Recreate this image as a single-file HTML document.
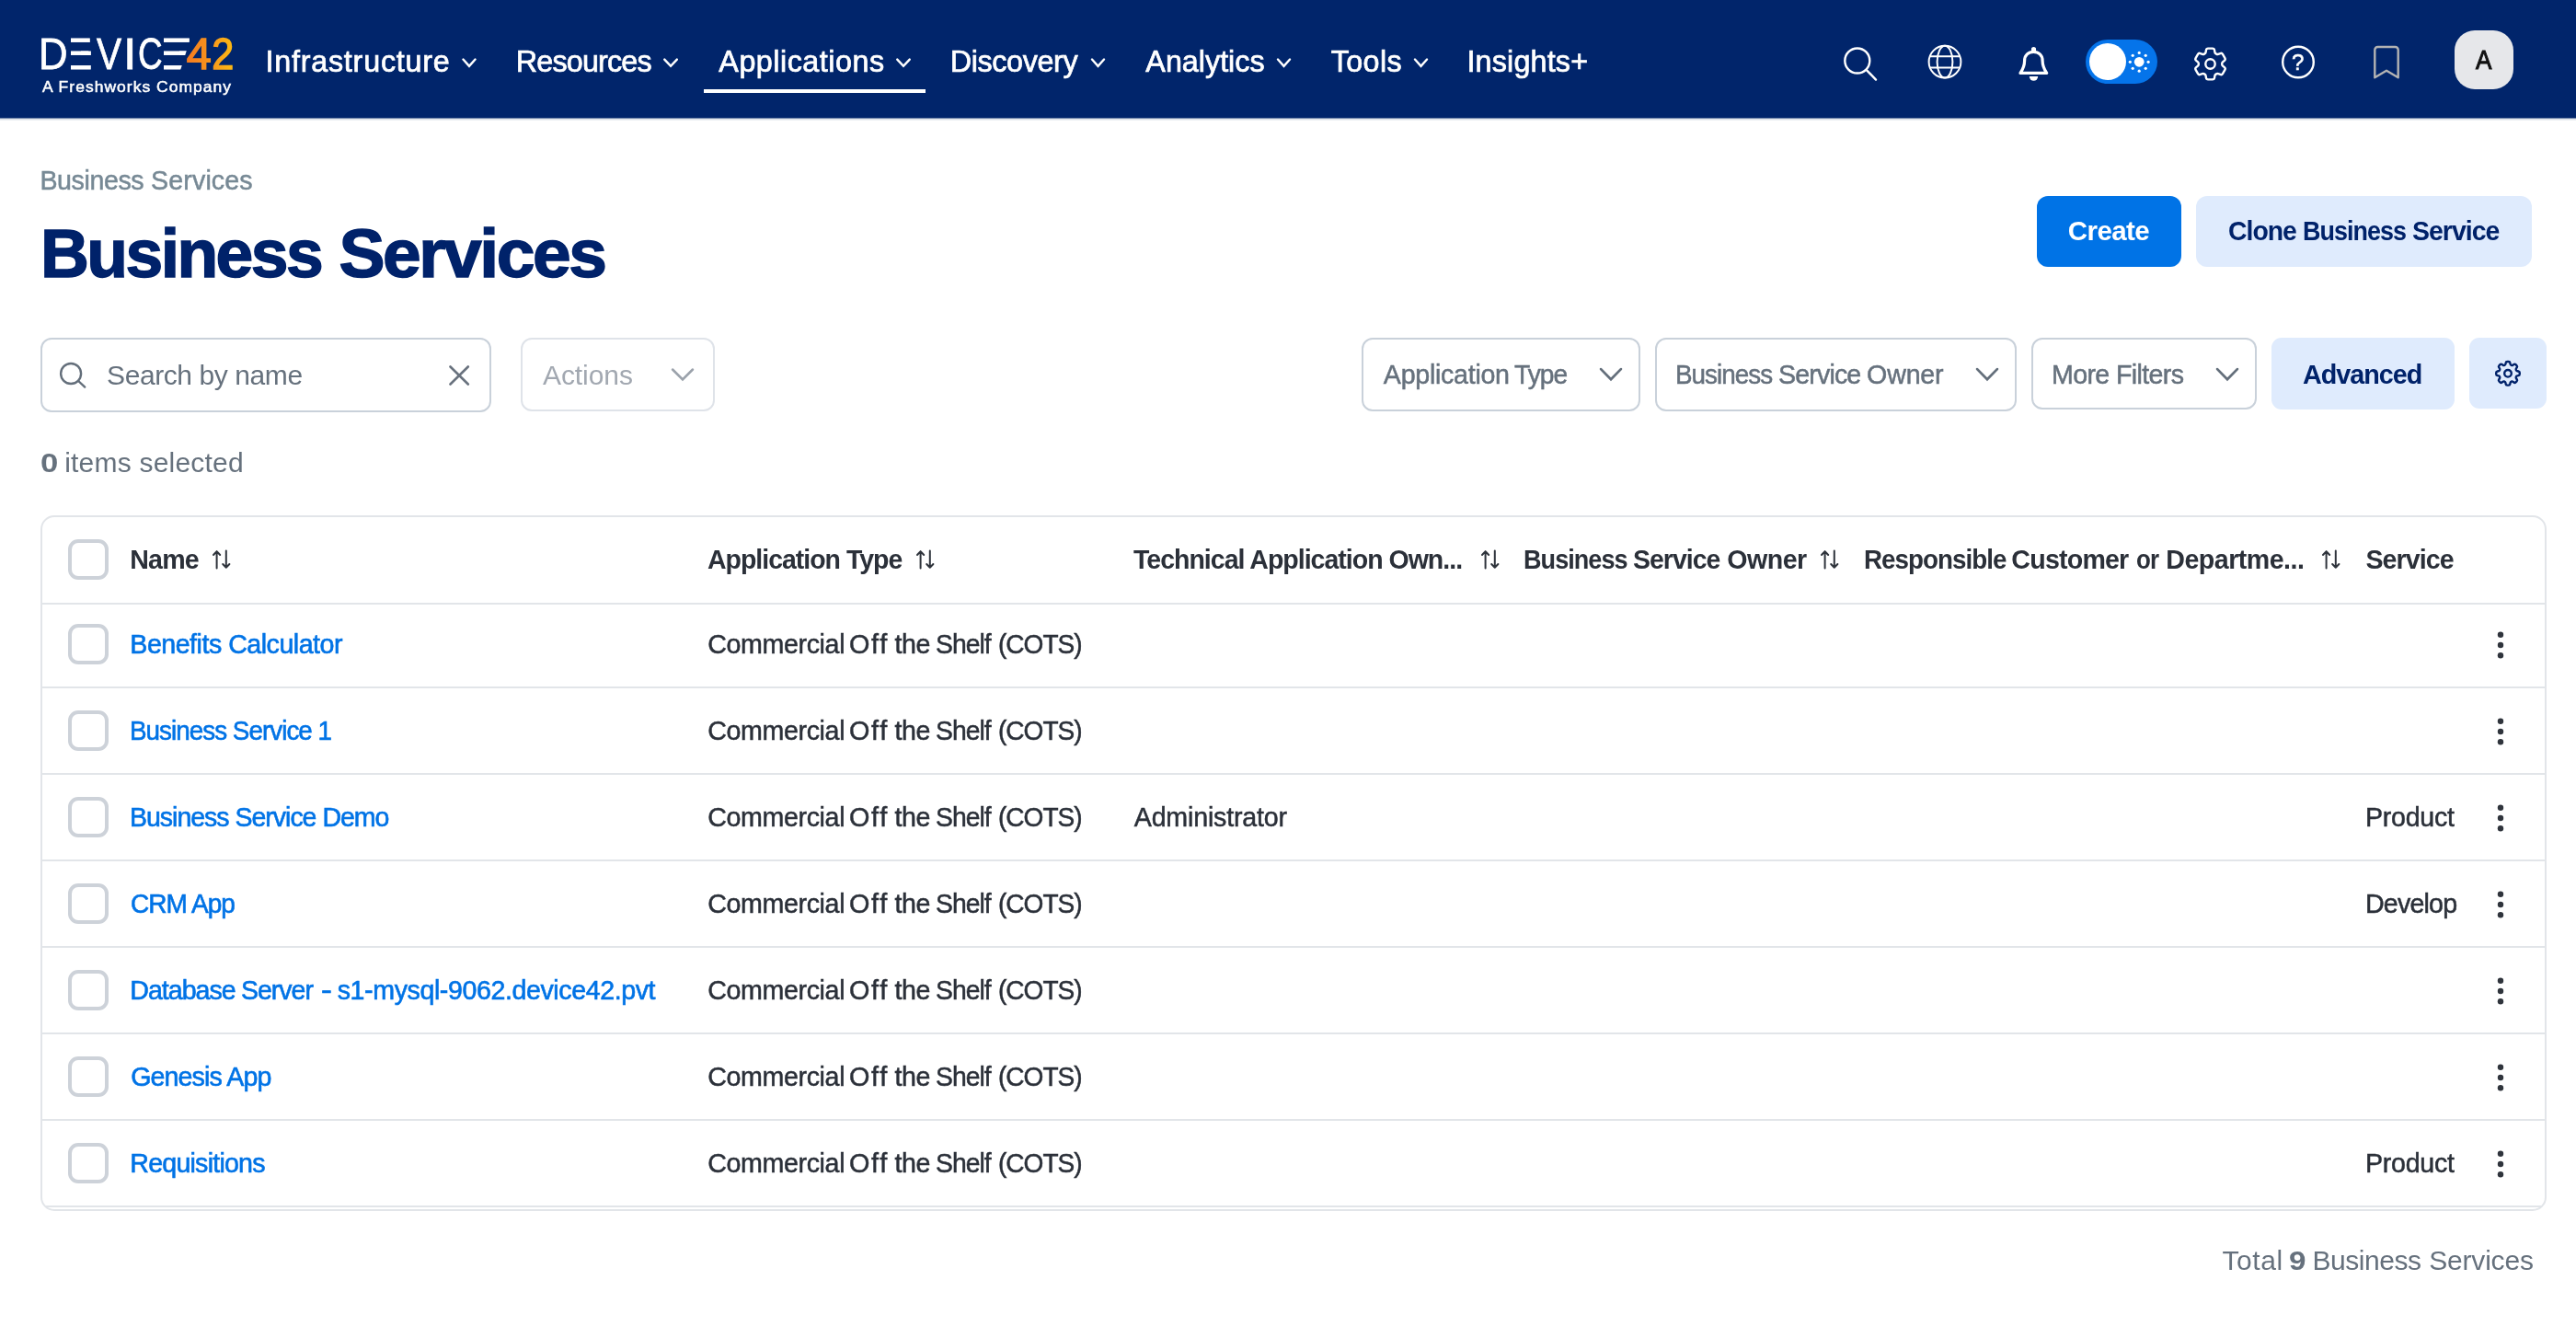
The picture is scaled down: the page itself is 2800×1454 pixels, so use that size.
<!DOCTYPE html><html lang="en"><head><meta charset="utf-8"><title>Business Services - Device42</title>
<style>html,body{margin:0;padding:0;background:#fff;}body{width:2800px;height:1454px;position:relative;overflow:hidden;font-family:"Liberation Sans",sans-serif;}a{text-decoration:none;}h1,p,ul,li{margin:0;padding:0;font-weight:normal;list-style:none;}#app{position:absolute;left:0;top:0;width:2800px;height:1454px;overflow:hidden;will-change:transform;background:#fff;}</style></head><body><div id="app">
<header>
<div style="position:absolute;left:0px;top:0px;width:2800px;height:128px;box-sizing:border-box;background:#01256b;"></div>
<div style="position:absolute;left:0px;top:128px;width:2800px;height:1px;box-sizing:border-box;background:#7185aa;"></div>
<div style="position:absolute;left:0px;top:129px;width:2800px;height:1px;box-sizing:border-box;background:#dfe3e8;"></div>
<div style="position:absolute;left:0px;top:130px;width:2800px;height:1px;box-sizing:border-box;background:#eceff2;"></div>
<div id="logo">
<span style="position:absolute;left:42.11px;top:34.12px;font-size:49.0px;line-height:1;white-space:nowrap;color:#fff;transform:scaleX(0.8912);transform-origin:0 0;-webkit-text-stroke:0.8px #fff;z-index:3;">D</span><span style="position:absolute;left:68.42px;top:34.12px;font-size:49.0px;line-height:1;white-space:nowrap;color:#fff;transform:scaleX(0.9907);transform-origin:0 0;-webkit-text-stroke:0.8px #fff;z-index:1;">E</span><span style="position:absolute;left:105.40px;top:34.12px;font-size:49.0px;line-height:1;white-space:nowrap;color:#fff;transform:scaleX(0.8285);transform-origin:0 0;-webkit-text-stroke:0.8px #fff;z-index:3;">V</span><span style="position:absolute;left:134.32px;top:34.12px;font-size:49.0px;line-height:1;white-space:nowrap;color:#fff;transform:scaleX(1.0612);transform-origin:0 0;-webkit-text-stroke:0.8px #fff;z-index:3;">I</span><span style="position:absolute;left:149.56px;top:34.12px;font-size:49.0px;line-height:1;white-space:nowrap;color:#fff;transform:scaleX(0.7526);transform-origin:0 0;-webkit-text-stroke:0.8px #fff;z-index:3;">C</span><span style="position:absolute;left:165.26px;top:34.12px;font-size:49.0px;line-height:1;white-space:nowrap;color:#fff;transform:scaleX(1.3618);transform-origin:0 0;-webkit-text-stroke:0.8px #fff;z-index:1;">E</span><svg style="position:absolute;left:0px;top:0px;overflow:visible;z-index:3;" width="1" height="1" viewBox="0 0 1 1"><defs><linearGradient id="lg" gradientUnits="userSpaceOnUse" x1="203" y1="0" x2="253" y2="0"><stop offset="0" stop-color="#f47b20"/><stop offset="0.5" stop-color="#f7941d"/><stop offset="1" stop-color="#fdb913"/></linearGradient></defs><text x="202.8" y="75.2" font-family="Liberation Sans, sans-serif" font-size="49" textLength="27" lengthAdjust="spacingAndGlyphs" fill="url(#lg)" stroke="url(#lg)" stroke-width="1.5">4</text><text x="230.3" y="75.2" font-family="Liberation Sans, sans-serif" font-size="49" textLength="24" lengthAdjust="spacingAndGlyphs" fill="url(#lg)" stroke="url(#lg)" stroke-width="1.5">2</text></svg>
<div style="position:absolute;left:70px;top:38px;width:6.7px;height:41px;box-sizing:border-box;background:#01256b;z-index:2;"></div>
<div style="position:absolute;left:166px;top:38px;width:11.5px;height:41px;box-sizing:border-box;background:#01256b;z-index:2;"></div>
<svg style="position:absolute;left:0px;top:0px;overflow:visible;z-index:2;" width="1" height="1" viewBox="0 0 1 1"><path d="M88 55.45H98.9V59.95H88Z M195 55.45H203V59.95H195Z" fill="#fff"/></svg>
<svg style="position:absolute;left:0px;top:0px;overflow:visible;z-index:2;" width="1" height="1" viewBox="0 0 1 1"><path d="M208.2 38 L216 38 L216 79 L195.2 79 Z" fill="#01256b"/></svg>
</div>
<span style="position:absolute;left:45.85px;top:86.29px;font-size:16.2px;line-height:1;white-space:nowrap;color:#fff;letter-spacing:0.972px;transform:scaleX(1.0772);transform-origin:0 0;-webkit-text-stroke:0.5px #fff;">A Freshworks Company</span>
<nav>
<a style="position:absolute;left:288.44px;top:50.66px;font-size:32.3px;line-height:1;white-space:nowrap;color:#fff;letter-spacing:0.776px;-webkit-text-stroke:0.7px #fff;">Infrastructure</a>
<svg style="position:absolute;left:0px;top:0px;overflow:visible;" width="1" height="1" viewBox="0 0 1 1"><path d="M503.46 64.56 L510.00 71.84 L516.54 64.56" fill="none" stroke="#fff" stroke-width="2.4" stroke-linecap="round" stroke-linejoin="miter"/></svg>
<a style="position:absolute;left:560.77px;top:50.66px;font-size:32.3px;line-height:1;white-space:nowrap;color:#fff;letter-spacing:-0.817px;-webkit-text-stroke:0.7px #fff;">Resources</a>
<svg style="position:absolute;left:0px;top:0px;overflow:visible;" width="1" height="1" viewBox="0 0 1 1"><path d="M722.26 64.56 L729.05 71.84 L735.84 64.56" fill="none" stroke="#fff" stroke-width="2.4" stroke-linecap="round" stroke-linejoin="miter"/></svg>
<a style="position:absolute;left:781.35px;top:50.66px;font-size:32.3px;line-height:1;white-space:nowrap;color:#fff;letter-spacing:0.509px;-webkit-text-stroke:0.7px #fff;">Applications</a>
<svg style="position:absolute;left:0px;top:0px;overflow:visible;" width="1" height="1" viewBox="0 0 1 1"><path d="M975.26 64.56 L982.00 71.84 L988.74 64.56" fill="none" stroke="#fff" stroke-width="2.4" stroke-linecap="round" stroke-linejoin="miter"/></svg>
<a style="position:absolute;left:1032.77px;top:50.66px;font-size:32.3px;line-height:1;white-space:nowrap;color:#fff;letter-spacing:-0.363px;-webkit-text-stroke:0.7px #fff;">Discovery</a>
<svg style="position:absolute;left:0px;top:0px;overflow:visible;" width="1" height="1" viewBox="0 0 1 1"><path d="M1186.96 64.56 L1193.50 71.84 L1200.04 64.56" fill="none" stroke="#fff" stroke-width="2.4" stroke-linecap="round" stroke-linejoin="miter"/></svg>
<a style="position:absolute;left:1245.35px;top:50.66px;font-size:32.3px;line-height:1;white-space:nowrap;color:#fff;-webkit-text-stroke:0.7px #fff;">Analytics</a>
<svg style="position:absolute;left:0px;top:0px;overflow:visible;" width="1" height="1" viewBox="0 0 1 1"><path d="M1388.96 64.56 L1395.50 71.84 L1402.04 64.56" fill="none" stroke="#fff" stroke-width="2.4" stroke-linecap="round" stroke-linejoin="miter"/></svg>
<a style="position:absolute;left:1446.70px;top:50.66px;font-size:32.3px;line-height:1;white-space:nowrap;color:#fff;letter-spacing:0.378px;-webkit-text-stroke:0.7px #fff;">Tools</a>
<svg style="position:absolute;left:0px;top:0px;overflow:visible;" width="1" height="1" viewBox="0 0 1 1"><path d="M1537.96 64.56 L1544.50 71.84 L1551.04 64.56" fill="none" stroke="#fff" stroke-width="2.4" stroke-linecap="round" stroke-linejoin="miter"/></svg>
<a style="position:absolute;left:1594.44px;top:50.66px;font-size:32.3px;line-height:1;white-space:nowrap;color:#fff;letter-spacing:0.181px;-webkit-text-stroke:0.7px #fff;">Insights+</a>
<div style="position:absolute;left:765px;top:97px;width:241px;height:4px;box-sizing:border-box;background:#fff;"></div>
</nav>
<svg style="position:absolute;left:0px;top:0px;overflow:visible;" width="1" height="1" viewBox="0 0 1 1"><circle cx="2018.8" cy="66" r="13.5" fill="none" stroke="#fff" stroke-width="2.4"/><path d="M2028.6 75.8L2039 86.6" stroke="#fff" stroke-width="2.4" stroke-linecap="round"/></svg>
<svg style="position:absolute;left:0px;top:0px;overflow:visible;" width="1" height="1" viewBox="0 0 1 1"><g fill="none" stroke="#fff" stroke-width="2"><circle cx="2114" cy="67.2" r="17.4"/><ellipse cx="2114" cy="67.2" rx="8.4" ry="17.4"/><path d="M2098 61.3H2130M2098 73.5H2130"/></g></svg>
<svg style="position:absolute;left:2194px;top:50px;overflow:visible;" width="33" height="38" viewBox="0 0 33 38"><path d="M2 29.4 C5 25 6.6 21 6.6 16 C6.6 10 10.8 6.4 16.35 6.4 C21.9 6.4 26.1 10 26.1 16 C26.1 21 27.7 25 30.7 29.4 Z" fill="none" stroke="#fff" stroke-width="3.2" stroke-linejoin="round"/><circle cx="16.5" cy="3.7" r="2.6" fill="#fff"/><path d="M11.8 33 A4.7 4.8 0 0 0 21.2 33 Z" fill="#fff"/></svg>
<div style="position:absolute;left:2267px;top:43px;width:78px;height:48px;box-sizing:border-box;background:#0574ea;border-radius:24px;"></div>
<div style="position:absolute;left:2271px;top:47px;width:40px;height:40px;box-sizing:border-box;background:#fff;border-radius:50%;"></div>
<svg style="position:absolute;left:0px;top:0px;overflow:visible;" width="1" height="1" viewBox="0 0 1 1"><circle cx="2325.2" cy="67.3" r="5.4" fill="#fff"/><circle cx="2335.10" cy="67.30" r="1.6" fill="#fff"/><circle cx="2332.20" cy="74.30" r="1.6" fill="#fff"/><circle cx="2325.20" cy="77.20" r="1.6" fill="#fff"/><circle cx="2318.20" cy="74.30" r="1.6" fill="#fff"/><circle cx="2315.30" cy="67.30" r="1.6" fill="#fff"/><circle cx="2318.20" cy="60.30" r="1.6" fill="#fff"/><circle cx="2325.20" cy="57.40" r="1.6" fill="#fff"/><circle cx="2332.20" cy="60.30" r="1.6" fill="#fff"/></svg>
<svg style="position:absolute;left:0px;top:0px;overflow:visible;" width="1" height="1" viewBox="0 0 1 1"><g transform="translate(2402.50 69.50) scale(1.8800) translate(-12 -12)" fill="none" stroke="#fff" stroke-width="1.277" stroke-linecap="round" stroke-linejoin="round"><path d="M9.594 3.94c.09-.542.56-.94 1.11-.94h2.593c.55 0 1.02.398 1.11.94l.213 1.281c.063.374.313.686.645.87.074.04.147.083.22.127.325.196.72.257 1.075.124l1.217-.456a1.125 1.125 0 0 1 1.37.49l1.296 2.247a1.125 1.125 0 0 1-.26 1.431l-1.003.827c-.293.241-.438.613-.43.992a7.723 7.723 0 0 1 0 .255c-.008.378.137.75.43.991l1.004.827c.424.35.534.955.26 1.43l-1.298 2.247a1.125 1.125 0 0 1-1.369.491l-1.217-.456c-.355-.133-.75-.072-1.076.124a6.47 6.47 0 0 1-.22.128c-.331.183-.581.495-.644.869l-.213 1.281c-.09.543-.56.94-1.11.94h-2.594c-.55 0-1.019-.398-1.11-.94l-.213-1.281c-.062-.374-.312-.686-.644-.87a6.52 6.52 0 0 1-.22-.127c-.325-.196-.72-.257-1.076-.124l-1.217.456a1.125 1.125 0 0 1-1.369-.49l-1.297-2.247a1.125 1.125 0 0 1 .26-1.431l1.004-.827c.292-.24.437-.613.43-.991a6.932 6.932 0 0 1 0-.255c.007-.38-.138-.751-.43-.992l-1.004-.827a1.125 1.125 0 0 1-.26-1.43l1.297-2.247a1.125 1.125 0 0 1 1.37-.491l1.216.456c.356.133.751.072 1.076-.124.072-.044.146-.086.22-.128.332-.183.582-.495.644-.869l.214-1.28Z"/><circle cx="12" cy="12" r="2.766"/></g></svg>
<svg style="position:absolute;left:0px;top:0px;overflow:visible;" width="1" height="1" viewBox="0 0 1 1"><circle cx="2498" cy="67.5" r="16.8" fill="none" stroke="#fff" stroke-width="2.4"/></svg>
<span style="position:absolute;left:2491.29px;top:57.11px;font-size:23.5px;line-height:1;white-space:nowrap;color:#fff;transform:scaleX(1.0195);transform-origin:0 0;-webkit-text-stroke:0.5px #fff;">?</span>
<svg style="position:absolute;left:0px;top:0px;overflow:visible;" width="1" height="1" viewBox="0 0 1 1"><path d="M2581.3 84.3V54.2a3.2 3.2 0 0 1 3.2-3.2h19a3.2 3.2 0 0 1 3.2 3.2V84.3L2594 76.8Z" fill="none" stroke="#b3b3b3" stroke-width="2.4" stroke-linejoin="round"/></svg>
<div style="position:absolute;left:2668px;top:33px;width:64px;height:64px;box-sizing:border-box;background:#e6e7ea;border-radius:22px;"></div>
<span style="position:absolute;left:2690.50px;top:51.29px;font-size:28.6px;line-height:1;white-space:nowrap;color:#111;transform:scaleX(0.9133);transform-origin:0 0;-webkit-text-stroke:1.0px #111;">A</span>
</header>
<main>
<span><span style="position:absolute;left:43.46px;top:181.79px;font-size:28.6px;line-height:1;white-space:nowrap;color:#778995;letter-spacing:-0.415px;-webkit-text-stroke:0.5px #778995;">Business</span> <span style="position:absolute;left:164.11px;top:181.79px;font-size:28.6px;line-height:1;white-space:nowrap;color:#778995;letter-spacing:0.119px;-webkit-text-stroke:0.5px #778995;">Services</span></span>
<h1>
<span style="position:absolute;left:43.86px;top:237.91px;font-size:75px;line-height:1;white-space:nowrap;color:#00226a;font-weight:700;letter-spacing:-2.625px;transform:scaleX(0.9763);transform-origin:0 0;-webkit-text-stroke:1.5px #00226a;">Business</span>
 
<span style="position:absolute;left:368.45px;top:237.91px;font-size:75px;line-height:1;white-space:nowrap;color:#00226a;font-weight:700;letter-spacing:-2.442px;-webkit-text-stroke:1.5px #00226a;">Services</span>
</h1>
<div style="position:absolute;left:2214px;top:213px;width:157px;height:77px;box-sizing:border-box;background:#0073e6;border-radius:12px;"></div>
<span style="position:absolute;left:2247.82px;top:236.03px;font-size:29.5px;line-height:1;white-space:nowrap;color:#fff;font-weight:700;letter-spacing:-0.575px;">Create</span>
<div style="position:absolute;left:2387px;top:213px;width:365px;height:77px;box-sizing:border-box;background:#dfebfd;border-radius:12px;"></div>
<span><span style="position:absolute;left:2421.86px;top:236.03px;font-size:29.5px;line-height:1;white-space:nowrap;color:#00226a;font-weight:700;letter-spacing:-1.033px;transform:scaleX(0.9622);transform-origin:0 0;">Clone</span> <span style="position:absolute;left:2503.38px;top:236.03px;font-size:29.5px;line-height:1;white-space:nowrap;color:#00226a;font-weight:700;letter-spacing:-1.033px;transform:scaleX(0.9125);transform-origin:0 0;">Business</span> <span style="position:absolute;left:2622.43px;top:236.03px;font-size:29.5px;line-height:1;white-space:nowrap;color:#00226a;font-weight:700;letter-spacing:-1.033px;transform:scaleX(0.9649);transform-origin:0 0;">Service</span></span>
<div style="position:absolute;left:44px;top:367px;width:490px;height:81px;box-sizing:border-box;border:2px solid #c9d1da;border-radius:12px;background:#fff;"></div>
<svg style="position:absolute;left:0px;top:0px;overflow:visible;" width="1" height="1" viewBox="0 0 1 1"><circle cx="77.1" cy="406" r="11" fill="none" stroke="#646f7b" stroke-width="2.4"/><path d="M85.2 414L92.2 420.6" stroke="#646f7b" stroke-width="2.4" stroke-linecap="round"/></svg>
<span style="position:absolute;left:116.10px;top:392.61px;font-size:30px;line-height:1;white-space:nowrap;color:#66717d;letter-spacing:-0.421px;">Search by name</span>
<svg style="position:absolute;left:0px;top:0px;overflow:visible;" width="1" height="1" viewBox="0 0 1 1"><path d="M489.5 398.5L508.8 417.5M508.8 398.5L489.5 417.5" stroke="#69727e" stroke-width="2.6" stroke-linecap="round"/></svg>
<div style="position:absolute;left:566px;top:367px;width:211px;height:80px;box-sizing:border-box;border:2px solid #dfe3e9;border-radius:12px;background:#fff;"></div>
<span style="position:absolute;left:590.00px;top:392.61px;font-size:30px;line-height:1;white-space:nowrap;color:#a2a8b1;letter-spacing:-0.080px;">Actions</span>
<svg style="position:absolute;left:0px;top:0px;overflow:visible;" width="1" height="1" viewBox="0 0 1 1"><path d="M731.04 401.54 L742.00 412.31 L752.96 401.54" fill="none" stroke="#9ba2ab" stroke-width="2.6" stroke-linecap="round" stroke-linejoin="miter"/></svg>
<div style="position:absolute;left:1480px;top:367px;width:303px;height:80px;box-sizing:border-box;border:2px solid #c9d1da;border-radius:12px;background:#fff;"></div>
<span><span style="position:absolute;left:1503.85px;top:392.79px;font-size:28.6px;line-height:1;white-space:nowrap;color:#66717d;letter-spacing:-0.271px;-webkit-text-stroke:0.5px #66717d;">Application</span> <span style="position:absolute;left:1645.69px;top:392.79px;font-size:28.6px;line-height:1;white-space:nowrap;color:#66717d;letter-spacing:-1.001px;transform:scaleX(0.9844);transform-origin:0 0;-webkit-text-stroke:0.5px #66717d;">Type</span></span>
<svg style="position:absolute;left:0px;top:0px;overflow:visible;" width="1" height="1" viewBox="0 0 1 1"><path d="M1740.12 401.12 L1751.00 412.18 L1761.88 401.12" fill="none" stroke="#646f7b" stroke-width="2.8" stroke-linecap="round" stroke-linejoin="miter"/></svg>
<div style="position:absolute;left:1799px;top:367px;width:393px;height:80px;box-sizing:border-box;border:2px solid #c9d1da;border-radius:12px;background:#fff;"></div>
<span><span style="position:absolute;left:1820.52px;top:392.79px;font-size:28.6px;line-height:1;white-space:nowrap;color:#66717d;letter-spacing:-1.001px;transform:scaleX(0.9727);transform-origin:0 0;-webkit-text-stroke:0.5px #66717d;">Business</span> <span style="position:absolute;left:1933.11px;top:392.79px;font-size:28.6px;line-height:1;white-space:nowrap;color:#66717d;letter-spacing:-0.865px;-webkit-text-stroke:0.5px #66717d;">Service</span> <span style="position:absolute;left:2029.11px;top:392.79px;font-size:28.6px;line-height:1;white-space:nowrap;color:#66717d;letter-spacing:-0.180px;-webkit-text-stroke:0.5px #66717d;">Owner</span></span>
<svg style="position:absolute;left:0px;top:0px;overflow:visible;" width="1" height="1" viewBox="0 0 1 1"><path d="M2149.12 401.12 L2160.00 412.18 L2170.88 401.12" fill="none" stroke="#646f7b" stroke-width="2.8" stroke-linecap="round" stroke-linejoin="miter"/></svg>
<div style="position:absolute;left:2208px;top:367px;width:245px;height:78px;box-sizing:border-box;border:2px solid #c9d1da;border-radius:12px;background:#fff;"></div>
<span style="position:absolute;left:2229.96px;top:392.79px;font-size:28.6px;line-height:1;white-space:nowrap;color:#66717d;letter-spacing:-0.619px;-webkit-text-stroke:0.5px #66717d;">More Filters</span>
<svg style="position:absolute;left:0px;top:0px;overflow:visible;" width="1" height="1" viewBox="0 0 1 1"><path d="M2410.12 401.12 L2421.00 412.18 L2431.88 401.12" fill="none" stroke="#646f7b" stroke-width="2.8" stroke-linecap="round" stroke-linejoin="miter"/></svg>
<div style="position:absolute;left:2469px;top:367px;width:199px;height:78px;box-sizing:border-box;background:#dfebfd;border-radius:11px;"></div>
<span style="position:absolute;left:2503.43px;top:391.53px;font-size:29.5px;line-height:1;white-space:nowrap;color:#00226a;font-weight:700;letter-spacing:-1.033px;transform:scaleX(0.9743);transform-origin:0 0;">Advanced</span>
<div style="position:absolute;left:2684px;top:367px;width:84px;height:77px;box-sizing:border-box;background:#dfebfd;border-radius:11px;"></div>
<svg style="position:absolute;left:0px;top:0px;overflow:visible;" width="1" height="1" viewBox="0 0 1 1"><g transform="translate(2726.00 405.80) scale(1.4200) translate(-12 -12)" fill="none" stroke="#00226a" stroke-width="1.690" stroke-linecap="round" stroke-linejoin="round"><path d="M10.343 3.94c.09-.542.56-.94 1.11-.94h1.093c.55 0 1.02.398 1.11.94l.149.894c.07.424.384.764.78.93.398.164.855.142 1.205-.108l.737-.527a1.125 1.125 0 0 1 1.45.12l.773.774c.39.389.44 1.002.12 1.45l-.527.737c-.25.35-.272.806-.107 1.204.165.397.505.71.93.78l.893.15c.543.09.94.559.94 1.109v1.094c0 .55-.397 1.02-.94 1.11l-.894.149c-.424.07-.764.383-.929.78-.165.398-.143.854.107 1.204l.527.738c.32.447.269 1.06-.12 1.45l-.774.773a1.125 1.125 0 0 1-1.449.12l-.738-.527c-.35-.25-.806-.272-1.203-.107-.398.165-.71.505-.781.929l-.149.894c-.09.542-.56.94-1.11.94h-1.094c-.55 0-1.019-.398-1.11-.94l-.148-.894c-.071-.424-.384-.764-.781-.93-.398-.164-.854-.142-1.204.108l-.738.527c-.447.32-1.06.269-1.45-.12l-.773-.774a1.125 1.125 0 0 1-.12-1.45l.527-.737c.25-.35.272-.806.108-1.204-.165-.397-.506-.71-.93-.78l-.894-.15c-.542-.09-.94-.56-.94-1.109v-1.094c0-.55.398-1.02.94-1.11l.894-.149c.424-.07.765-.383.93-.78.165-.398.143-.854-.108-1.204l-.526-.738a1.125 1.125 0 0 1 .12-1.45l.773-.773a1.125 1.125 0 0 1 1.45-.12l.737.527c.35.25.807.272 1.204.107.397-.165.71-.505.78-.929l.15-.894Z"/><circle cx="12" cy="12" r="2.676"/></g></svg>
<p>
<span style="position:absolute;left:43.96px;top:487.61px;font-size:30px;line-height:1;white-space:nowrap;color:#66717d;font-weight:700;transform:scaleX(1.1565);transform-origin:0 0;">0</span>
<span style="position:absolute;left:70.20px;top:487.61px;font-size:30px;line-height:1;white-space:nowrap;color:#66717d;letter-spacing:0.211px;">items selected</span>
</p>
<section>
<div style="position:absolute;left:44px;top:560px;width:2724px;height:756px;box-sizing:border-box;border:2px solid #e2e5e9;border-radius:15px;background:#fff;"></div>
<div style="position:absolute;left:46px;top:655px;width:2720px;height:2px;box-sizing:border-box;background:#e2e5e9;"></div>
<div style="position:absolute;left:46px;top:746px;width:2720px;height:2px;box-sizing:border-box;background:#e2e5e9;"></div>
<div style="position:absolute;left:46px;top:840px;width:2720px;height:2px;box-sizing:border-box;background:#e2e5e9;"></div>
<div style="position:absolute;left:46px;top:934px;width:2720px;height:2px;box-sizing:border-box;background:#e2e5e9;"></div>
<div style="position:absolute;left:46px;top:1028px;width:2720px;height:2px;box-sizing:border-box;background:#e2e5e9;"></div>
<div style="position:absolute;left:46px;top:1122px;width:2720px;height:2px;box-sizing:border-box;background:#e2e5e9;"></div>
<div style="position:absolute;left:46px;top:1216px;width:2720px;height:2px;box-sizing:border-box;background:#e2e5e9;"></div>
<div style="position:absolute;left:49px;top:1310px;width:2714px;height:2px;box-sizing:border-box;background:#e2e5e9;"></div>
<div style="position:absolute;left:74px;top:586px;width:44px;height:44px;box-sizing:border-box;border:4px solid #cdd2d9;border-radius:11px;background:#fff;"></div>
<span style="position:absolute;left:141.28px;top:593.79px;font-size:28.6px;line-height:1;white-space:nowrap;color:#2b3039;font-weight:700;letter-spacing:-0.811px;">Name</span>
<svg style="position:absolute;left:231px;top:598px;overflow:visible;" width="19" height="20" viewBox="0 0 19 20"><path d="M4.6 19.4V1.2M1 5L4.6 1.2L8.2 5M14.8 0.6V18.8M11.2 15L14.8 18.8L18.4 15" fill="none" stroke="#2f343c" stroke-width="2" stroke-linecap="round" stroke-linejoin="round"/></svg>
<span style="position:absolute;left:769.43px;top:593.79px;font-size:28.6px;line-height:1;white-space:nowrap;color:#2b3039;font-weight:700;letter-spacing:-1.001px;transform:scaleX(0.9955);transform-origin:0 0;">Application Type</span>
<svg style="position:absolute;left:996px;top:598px;overflow:visible;" width="19" height="20" viewBox="0 0 19 20"><path d="M4.6 19.4V1.2M1 5L4.6 1.2L8.2 5M14.8 0.6V18.8M11.2 15L14.8 18.8L18.4 15" fill="none" stroke="#2f343c" stroke-width="2" stroke-linecap="round" stroke-linejoin="round"/></svg>
<span style="position:absolute;left:1231.71px;top:593.79px;font-size:28.6px;line-height:1;white-space:nowrap;color:#2b3039;font-weight:700;letter-spacing:-1.001px;transform:scaleX(0.9973);transform-origin:0 0;">Technical Application Own...</span>
<svg style="position:absolute;left:1610px;top:598px;overflow:visible;" width="19" height="20" viewBox="0 0 19 20"><path d="M4.6 19.4V1.2M1 5L4.6 1.2L8.2 5M14.8 0.6V18.8M11.2 15L14.8 18.8L18.4 15" fill="none" stroke="#2f343c" stroke-width="2" stroke-linecap="round" stroke-linejoin="round"/></svg>
<span><span style="position:absolute;left:1656.38px;top:593.79px;font-size:28.6px;line-height:1;white-space:nowrap;color:#2b3039;font-weight:700;letter-spacing:-1.001px;transform:scaleX(0.9454);transform-origin:0 0;">Business</span> <span style="position:absolute;left:1775.43px;top:593.79px;font-size:28.6px;line-height:1;white-space:nowrap;color:#2b3039;font-weight:700;letter-spacing:-1.001px;transform:scaleX(0.9952);transform-origin:0 0;">Service</span> <span style="position:absolute;left:1877.36px;top:593.79px;font-size:28.6px;line-height:1;white-space:nowrap;color:#2b3039;font-weight:700;letter-spacing:-0.523px;">Owner</span></span>
<svg style="position:absolute;left:1979px;top:598px;overflow:visible;" width="19" height="20" viewBox="0 0 19 20"><path d="M4.6 19.4V1.2M1 5L4.6 1.2L8.2 5M14.8 0.6V18.8M11.2 15L14.8 18.8L18.4 15" fill="none" stroke="#2f343c" stroke-width="2" stroke-linecap="round" stroke-linejoin="round"/></svg>
<span><span style="position:absolute;left:2026.33px;top:593.79px;font-size:28.6px;line-height:1;white-space:nowrap;color:#2b3039;font-weight:700;letter-spacing:-1.001px;transform:scaleX(0.9710);transform-origin:0 0;">Responsible</span> <span style="position:absolute;left:2186.36px;top:593.79px;font-size:28.6px;line-height:1;white-space:nowrap;color:#2b3039;font-weight:700;letter-spacing:-0.798px;">Customer</span> <span style="position:absolute;left:2321.72px;top:593.79px;font-size:28.6px;line-height:1;white-space:nowrap;color:#2b3039;font-weight:700;letter-spacing:-1.001px;transform:scaleX(0.9064);transform-origin:0 0;">or</span> <span style="position:absolute;left:2354.28px;top:593.79px;font-size:28.6px;line-height:1;white-space:nowrap;color:#2b3039;font-weight:700;letter-spacing:-0.511px;">Departme...</span></span>
<svg style="position:absolute;left:2524px;top:598px;overflow:visible;" width="19" height="20" viewBox="0 0 19 20"><path d="M4.6 19.4V1.2M1 5L4.6 1.2L8.2 5M14.8 0.6V18.8M11.2 15L14.8 18.8L18.4 15" fill="none" stroke="#2f343c" stroke-width="2" stroke-linecap="round" stroke-linejoin="round"/></svg>
<span style="position:absolute;left:2571.43px;top:593.79px;font-size:28.6px;line-height:1;white-space:nowrap;color:#2b3039;font-weight:700;letter-spacing:-0.909px;">Service</span>
<div style="position:absolute;left:74px;top:678px;width:44px;height:44px;box-sizing:border-box;border:4px solid #cdd2d9;border-radius:11px;background:#fff;"></div>
<a style="position:absolute;left:141.31px;top:685.79px;font-size:28.6px;line-height:1;white-space:nowrap;color:#0073e6;letter-spacing:-0.488px;-webkit-text-stroke:0.6px #0073e6;">Benefits Calculator</a>
<span><span style="position:absolute;left:769.32px;top:685.79px;font-size:28.6px;line-height:1;white-space:nowrap;color:#2b3039;letter-spacing:-0.372px;-webkit-text-stroke:0.5px #2b3039;">Commercial</span> <span style="position:absolute;left:922.85px;top:685.79px;font-size:28.6px;line-height:1;white-space:nowrap;color:#2b3039;letter-spacing:1.716px;transform:scaleX(1.0070);transform-origin:0 0;-webkit-text-stroke:0.5px #2b3039;">Off</span> <span style="position:absolute;left:972.46px;top:685.79px;font-size:28.6px;line-height:1;white-space:nowrap;color:#2b3039;letter-spacing:-0.344px;-webkit-text-stroke:0.5px #2b3039;">the</span> <span style="position:absolute;left:1016.62px;top:685.79px;font-size:28.6px;line-height:1;white-space:nowrap;color:#2b3039;letter-spacing:-1.001px;transform:scaleX(0.9900);transform-origin:0 0;-webkit-text-stroke:0.5px #2b3039;">Shelf</span> <span style="position:absolute;left:1084.57px;top:685.79px;font-size:28.6px;line-height:1;white-space:nowrap;color:#2b3039;letter-spacing:-1.001px;transform:scaleX(0.9805);transform-origin:0 0;-webkit-text-stroke:0.5px #2b3039;">(COTS)</span></span>
<svg style="position:absolute;left:2713.8px;top:684.8px;overflow:visible;" width="8" height="32" viewBox="0 0 8 32"><circle cx="4" cy="4.800000000000001" r="3.2" fill="#2f343c"/><circle cx="4" cy="16" r="3.2" fill="#2f343c"/><circle cx="4" cy="27.2" r="3.2" fill="#2f343c"/></svg>
<div style="position:absolute;left:74px;top:772px;width:44px;height:44px;box-sizing:border-box;border:4px solid #cdd2d9;border-radius:11px;background:#fff;"></div>
<a style="position:absolute;left:141.37px;top:779.79px;font-size:28.6px;line-height:1;white-space:nowrap;color:#0073e6;letter-spacing:-1.001px;transform:scaleX(0.9731);transform-origin:0 0;-webkit-text-stroke:0.6px #0073e6;">Business Service 1</a>
<span><span style="position:absolute;left:769.32px;top:779.79px;font-size:28.6px;line-height:1;white-space:nowrap;color:#2b3039;letter-spacing:-0.372px;-webkit-text-stroke:0.5px #2b3039;">Commercial</span> <span style="position:absolute;left:922.85px;top:779.79px;font-size:28.6px;line-height:1;white-space:nowrap;color:#2b3039;letter-spacing:1.716px;transform:scaleX(1.0070);transform-origin:0 0;-webkit-text-stroke:0.5px #2b3039;">Off</span> <span style="position:absolute;left:972.46px;top:779.79px;font-size:28.6px;line-height:1;white-space:nowrap;color:#2b3039;letter-spacing:-0.344px;-webkit-text-stroke:0.5px #2b3039;">the</span> <span style="position:absolute;left:1016.62px;top:779.79px;font-size:28.6px;line-height:1;white-space:nowrap;color:#2b3039;letter-spacing:-1.001px;transform:scaleX(0.9900);transform-origin:0 0;-webkit-text-stroke:0.5px #2b3039;">Shelf</span> <span style="position:absolute;left:1084.57px;top:779.79px;font-size:28.6px;line-height:1;white-space:nowrap;color:#2b3039;letter-spacing:-1.001px;transform:scaleX(0.9805);transform-origin:0 0;-webkit-text-stroke:0.5px #2b3039;">(COTS)</span></span>
<svg style="position:absolute;left:2713.8px;top:778.8px;overflow:visible;" width="8" height="32" viewBox="0 0 8 32"><circle cx="4" cy="4.800000000000001" r="3.2" fill="#2f343c"/><circle cx="4" cy="16" r="3.2" fill="#2f343c"/><circle cx="4" cy="27.2" r="3.2" fill="#2f343c"/></svg>
<div style="position:absolute;left:74px;top:866px;width:44px;height:44px;box-sizing:border-box;border:4px solid #cdd2d9;border-radius:11px;background:#fff;"></div>
<a style="position:absolute;left:141.32px;top:873.79px;font-size:28.6px;line-height:1;white-space:nowrap;color:#0073e6;letter-spacing:-1.001px;transform:scaleX(0.9959);transform-origin:0 0;-webkit-text-stroke:0.6px #0073e6;">Business Service Demo</a>
<span><span style="position:absolute;left:769.32px;top:873.79px;font-size:28.6px;line-height:1;white-space:nowrap;color:#2b3039;letter-spacing:-0.372px;-webkit-text-stroke:0.5px #2b3039;">Commercial</span> <span style="position:absolute;left:922.85px;top:873.79px;font-size:28.6px;line-height:1;white-space:nowrap;color:#2b3039;letter-spacing:1.716px;transform:scaleX(1.0070);transform-origin:0 0;-webkit-text-stroke:0.5px #2b3039;">Off</span> <span style="position:absolute;left:972.46px;top:873.79px;font-size:28.6px;line-height:1;white-space:nowrap;color:#2b3039;letter-spacing:-0.344px;-webkit-text-stroke:0.5px #2b3039;">the</span> <span style="position:absolute;left:1016.62px;top:873.79px;font-size:28.6px;line-height:1;white-space:nowrap;color:#2b3039;letter-spacing:-1.001px;transform:scaleX(0.9900);transform-origin:0 0;-webkit-text-stroke:0.5px #2b3039;">Shelf</span> <span style="position:absolute;left:1084.57px;top:873.79px;font-size:28.6px;line-height:1;white-space:nowrap;color:#2b3039;letter-spacing:-1.001px;transform:scaleX(0.9805);transform-origin:0 0;-webkit-text-stroke:0.5px #2b3039;">(COTS)</span></span>
<span style="position:absolute;left:1232.75px;top:873.79px;font-size:28.6px;line-height:1;white-space:nowrap;color:#2b3039;letter-spacing:-0.175px;-webkit-text-stroke:0.5px #2b3039;">Administrator</span>
<span style="position:absolute;left:2570.96px;top:873.79px;font-size:28.6px;line-height:1;white-space:nowrap;color:#2b3039;letter-spacing:-0.273px;-webkit-text-stroke:0.5px #2b3039;width:98.04px;overflow:hidden;padding-bottom:8px;">Production</span>
<svg style="position:absolute;left:2713.8px;top:872.8px;overflow:visible;" width="8" height="32" viewBox="0 0 8 32"><circle cx="4" cy="4.800000000000001" r="3.2" fill="#2f343c"/><circle cx="4" cy="16" r="3.2" fill="#2f343c"/><circle cx="4" cy="27.2" r="3.2" fill="#2f343c"/></svg>
<div style="position:absolute;left:74px;top:960px;width:44px;height:44px;box-sizing:border-box;border:4px solid #cdd2d9;border-radius:11px;background:#fff;"></div>
<a style="position:absolute;left:142.20px;top:967.79px;font-size:28.6px;line-height:1;white-space:nowrap;color:#0073e6;letter-spacing:-1.001px;transform:scaleX(0.9793);transform-origin:0 0;-webkit-text-stroke:0.6px #0073e6;">CRM App</a>
<span><span style="position:absolute;left:769.32px;top:967.79px;font-size:28.6px;line-height:1;white-space:nowrap;color:#2b3039;letter-spacing:-0.372px;-webkit-text-stroke:0.5px #2b3039;">Commercial</span> <span style="position:absolute;left:922.85px;top:967.79px;font-size:28.6px;line-height:1;white-space:nowrap;color:#2b3039;letter-spacing:1.716px;transform:scaleX(1.0070);transform-origin:0 0;-webkit-text-stroke:0.5px #2b3039;">Off</span> <span style="position:absolute;left:972.46px;top:967.79px;font-size:28.6px;line-height:1;white-space:nowrap;color:#2b3039;letter-spacing:-0.344px;-webkit-text-stroke:0.5px #2b3039;">the</span> <span style="position:absolute;left:1016.62px;top:967.79px;font-size:28.6px;line-height:1;white-space:nowrap;color:#2b3039;letter-spacing:-1.001px;transform:scaleX(0.9900);transform-origin:0 0;-webkit-text-stroke:0.5px #2b3039;">Shelf</span> <span style="position:absolute;left:1084.57px;top:967.79px;font-size:28.6px;line-height:1;white-space:nowrap;color:#2b3039;letter-spacing:-1.001px;transform:scaleX(0.9805);transform-origin:0 0;-webkit-text-stroke:0.5px #2b3039;">(COTS)</span></span>
<span style="position:absolute;left:2570.96px;top:967.79px;font-size:28.6px;line-height:1;white-space:nowrap;color:#2b3039;letter-spacing:-0.802px;-webkit-text-stroke:0.5px #2b3039;width:99.64px;overflow:hidden;padding-bottom:8px;">Development</span>
<svg style="position:absolute;left:2713.8px;top:966.8px;overflow:visible;" width="8" height="32" viewBox="0 0 8 32"><circle cx="4" cy="4.800000000000001" r="3.2" fill="#2f343c"/><circle cx="4" cy="16" r="3.2" fill="#2f343c"/><circle cx="4" cy="27.2" r="3.2" fill="#2f343c"/></svg>
<div style="position:absolute;left:74px;top:1054px;width:44px;height:44px;box-sizing:border-box;border:4px solid #cdd2d9;border-radius:11px;background:#fff;"></div>
<a><span style="position:absolute;left:141.31px;top:1061.79px;font-size:28.6px;line-height:1;white-space:nowrap;color:#0073e6;letter-spacing:-1.001px;-webkit-text-stroke:0.6px #0073e6;">Database</span> <span style="position:absolute;left:262.16px;top:1061.79px;font-size:28.6px;line-height:1;white-space:nowrap;color:#0073e6;letter-spacing:-1.001px;transform:scaleX(0.9959);transform-origin:0 0;-webkit-text-stroke:0.6px #0073e6;">Server</span> <span style="position:absolute;left:348.88px;top:1061.79px;font-size:28.6px;line-height:1;white-space:nowrap;color:#0073e6;transform:scaleX(1.2448);transform-origin:0 0;-webkit-text-stroke:0.6px #0073e6;">-</span> <span style="position:absolute;left:366.73px;top:1061.79px;font-size:28.6px;line-height:1;white-space:nowrap;color:#0073e6;letter-spacing:-0.407px;-webkit-text-stroke:0.6px #0073e6;">s1-mysql-9062.device42.pvt</span></a>
<span><span style="position:absolute;left:769.32px;top:1061.79px;font-size:28.6px;line-height:1;white-space:nowrap;color:#2b3039;letter-spacing:-0.372px;-webkit-text-stroke:0.5px #2b3039;">Commercial</span> <span style="position:absolute;left:922.85px;top:1061.79px;font-size:28.6px;line-height:1;white-space:nowrap;color:#2b3039;letter-spacing:1.716px;transform:scaleX(1.0070);transform-origin:0 0;-webkit-text-stroke:0.5px #2b3039;">Off</span> <span style="position:absolute;left:972.46px;top:1061.79px;font-size:28.6px;line-height:1;white-space:nowrap;color:#2b3039;letter-spacing:-0.344px;-webkit-text-stroke:0.5px #2b3039;">the</span> <span style="position:absolute;left:1016.62px;top:1061.79px;font-size:28.6px;line-height:1;white-space:nowrap;color:#2b3039;letter-spacing:-1.001px;transform:scaleX(0.9900);transform-origin:0 0;-webkit-text-stroke:0.5px #2b3039;">Shelf</span> <span style="position:absolute;left:1084.57px;top:1061.79px;font-size:28.6px;line-height:1;white-space:nowrap;color:#2b3039;letter-spacing:-1.001px;transform:scaleX(0.9805);transform-origin:0 0;-webkit-text-stroke:0.5px #2b3039;">(COTS)</span></span>
<svg style="position:absolute;left:2713.8px;top:1060.8px;overflow:visible;" width="8" height="32" viewBox="0 0 8 32"><circle cx="4" cy="4.800000000000001" r="3.2" fill="#2f343c"/><circle cx="4" cy="16" r="3.2" fill="#2f343c"/><circle cx="4" cy="27.2" r="3.2" fill="#2f343c"/></svg>
<div style="position:absolute;left:74px;top:1148px;width:44px;height:44px;box-sizing:border-box;border:4px solid #cdd2d9;border-radius:11px;background:#fff;"></div>
<a style="position:absolute;left:142.17px;top:1155.79px;font-size:28.6px;line-height:1;white-space:nowrap;color:#0073e6;letter-spacing:-0.889px;-webkit-text-stroke:0.6px #0073e6;">Genesis App</a>
<span><span style="position:absolute;left:769.32px;top:1155.79px;font-size:28.6px;line-height:1;white-space:nowrap;color:#2b3039;letter-spacing:-0.372px;-webkit-text-stroke:0.5px #2b3039;">Commercial</span> <span style="position:absolute;left:922.85px;top:1155.79px;font-size:28.6px;line-height:1;white-space:nowrap;color:#2b3039;letter-spacing:1.716px;transform:scaleX(1.0070);transform-origin:0 0;-webkit-text-stroke:0.5px #2b3039;">Off</span> <span style="position:absolute;left:972.46px;top:1155.79px;font-size:28.6px;line-height:1;white-space:nowrap;color:#2b3039;letter-spacing:-0.344px;-webkit-text-stroke:0.5px #2b3039;">the</span> <span style="position:absolute;left:1016.62px;top:1155.79px;font-size:28.6px;line-height:1;white-space:nowrap;color:#2b3039;letter-spacing:-1.001px;transform:scaleX(0.9900);transform-origin:0 0;-webkit-text-stroke:0.5px #2b3039;">Shelf</span> <span style="position:absolute;left:1084.57px;top:1155.79px;font-size:28.6px;line-height:1;white-space:nowrap;color:#2b3039;letter-spacing:-1.001px;transform:scaleX(0.9805);transform-origin:0 0;-webkit-text-stroke:0.5px #2b3039;">(COTS)</span></span>
<svg style="position:absolute;left:2713.8px;top:1154.8px;overflow:visible;" width="8" height="32" viewBox="0 0 8 32"><circle cx="4" cy="4.800000000000001" r="3.2" fill="#2f343c"/><circle cx="4" cy="16" r="3.2" fill="#2f343c"/><circle cx="4" cy="27.2" r="3.2" fill="#2f343c"/></svg>
<div style="position:absolute;left:74px;top:1242px;width:44px;height:44px;box-sizing:border-box;border:4px solid #cdd2d9;border-radius:11px;background:#fff;"></div>
<a style="position:absolute;left:141.31px;top:1249.79px;font-size:28.6px;line-height:1;white-space:nowrap;color:#0073e6;letter-spacing:-0.777px;-webkit-text-stroke:0.6px #0073e6;">Requisitions</a>
<span><span style="position:absolute;left:769.32px;top:1249.79px;font-size:28.6px;line-height:1;white-space:nowrap;color:#2b3039;letter-spacing:-0.372px;-webkit-text-stroke:0.5px #2b3039;">Commercial</span> <span style="position:absolute;left:922.85px;top:1249.79px;font-size:28.6px;line-height:1;white-space:nowrap;color:#2b3039;letter-spacing:1.716px;transform:scaleX(1.0070);transform-origin:0 0;-webkit-text-stroke:0.5px #2b3039;">Off</span> <span style="position:absolute;left:972.46px;top:1249.79px;font-size:28.6px;line-height:1;white-space:nowrap;color:#2b3039;letter-spacing:-0.344px;-webkit-text-stroke:0.5px #2b3039;">the</span> <span style="position:absolute;left:1016.62px;top:1249.79px;font-size:28.6px;line-height:1;white-space:nowrap;color:#2b3039;letter-spacing:-1.001px;transform:scaleX(0.9900);transform-origin:0 0;-webkit-text-stroke:0.5px #2b3039;">Shelf</span> <span style="position:absolute;left:1084.57px;top:1249.79px;font-size:28.6px;line-height:1;white-space:nowrap;color:#2b3039;letter-spacing:-1.001px;transform:scaleX(0.9805);transform-origin:0 0;-webkit-text-stroke:0.5px #2b3039;">(COTS)</span></span>
<span style="position:absolute;left:2570.96px;top:1249.79px;font-size:28.6px;line-height:1;white-space:nowrap;color:#2b3039;letter-spacing:-0.273px;-webkit-text-stroke:0.5px #2b3039;width:98.04px;overflow:hidden;padding-bottom:8px;">Production</span>
<svg style="position:absolute;left:2713.8px;top:1248.8px;overflow:visible;" width="8" height="32" viewBox="0 0 8 32"><circle cx="4" cy="4.800000000000001" r="3.2" fill="#2f343c"/><circle cx="4" cy="16" r="3.2" fill="#2f343c"/><circle cx="4" cy="27.2" r="3.2" fill="#2f343c"/></svg>
</section>
<p>
<span style="position:absolute;left:2415.40px;top:1354.61px;font-size:30px;line-height:1;white-space:nowrap;color:#66717d;letter-spacing:0.599px;">Total</span>
<b style="position:absolute;left:2488.00px;top:1354.61px;font-size:30px;line-height:1;white-space:nowrap;color:#66717d;font-weight:700;transform:scaleX(1.1088);transform-origin:0 0;">9</b>
<span style="position:absolute;left:2513.60px;top:1354.61px;font-size:30px;line-height:1;white-space:nowrap;color:#66717d;letter-spacing:-0.490px;">Business</span>
<span style="position:absolute;left:2640.30px;top:1354.61px;font-size:30px;line-height:1;white-space:nowrap;color:#66717d;letter-spacing:-0.205px;">Services</span>
</p>
</main></div></body></html>
